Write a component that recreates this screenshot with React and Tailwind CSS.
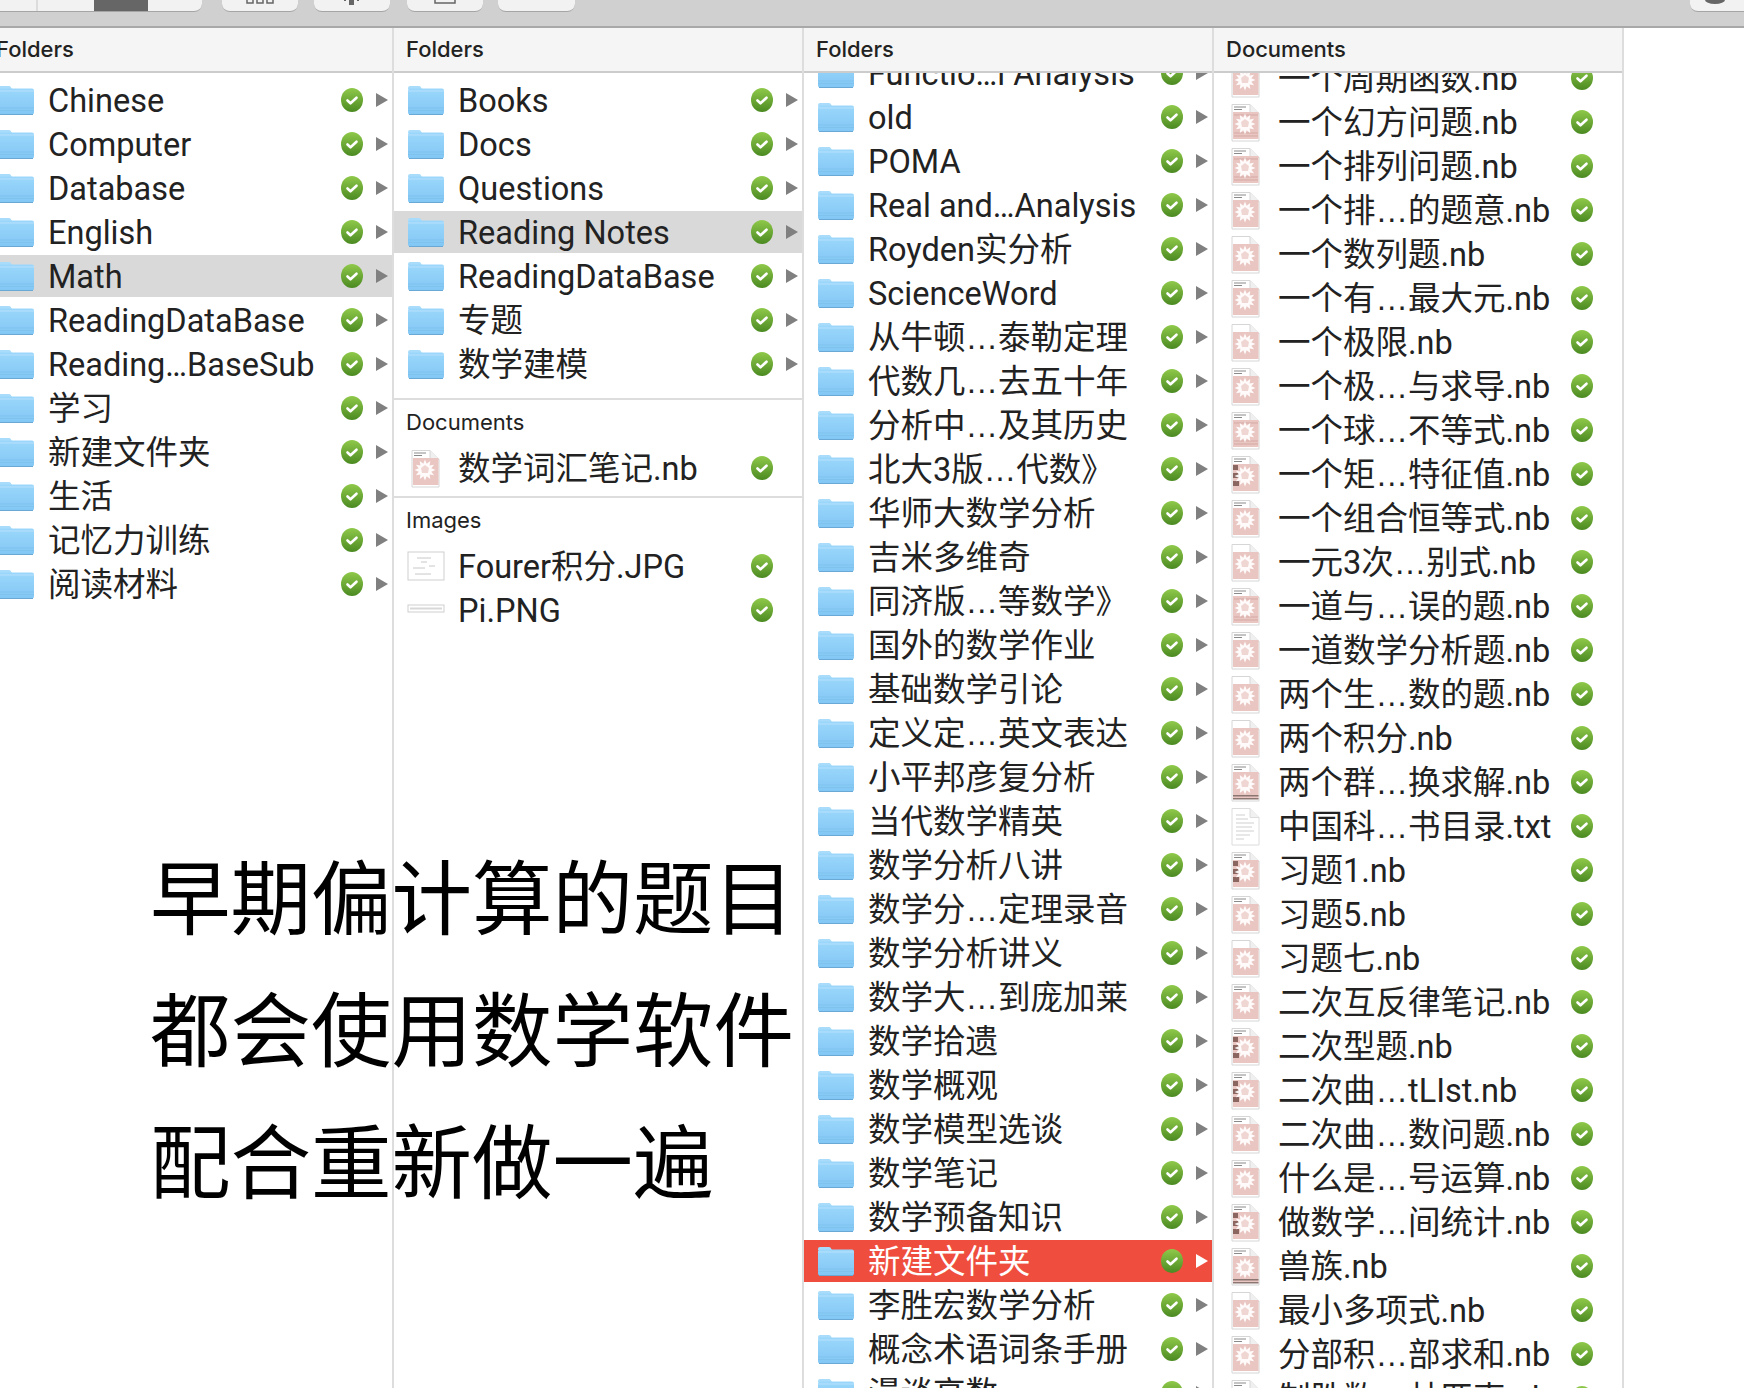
import React from 'react';

const folders1 = ['Chinese', 'Computer', 'Database', 'English', 'Math', 'ReadingDataBase', 'Reading…BaseSub', '学习', '新建文件夹', '生活', '记忆力训练', '阅读材料'];
const folders2 = ['Books', 'Docs', 'Questions', 'Reading Notes', 'ReadingDataBase', '专题', '数学建模'];
const folders3 = ['Functio…l Analysis', 'old', 'POMA', 'Real and…Analysis', 'Royden实分析', 'ScienceWord', '从牛顿…泰勒定理', '代数几…去五十年', '分析中…及其历史', '北大3版…代数》', '华师大数学分析', '吉米多维奇', '同济版…等数学》', '国外的数学作业', '基础数学引论', '定义定…英文表达', '小平邦彦复分析', '当代数学精英', '数学分析八讲', '数学分…定理录音', '数学分析讲义', '数学大…到庞加莱', '数学拾遗', '数学概观', '数学模型选谈', '数学笔记', '数学预备知识', '新建文件夹', '李胜宏数学分析', '概念术语词条手册', '漫谈高数'];
// [name, icon variant]
const docs = [
  ['一个周期函数.nb', 'lines'], ['一个幻方问题.nb', 'dense'], ['一个排列问题.nb', 'dense'], ['一个排…的题意.nb', 'lines'],
  ['一个数列题.nb', 'plain'], ['一个有…最大元.nb', 'lines'], ['一个极限.nb', 'plain'], ['一个极…与求导.nb', 'lines'],
  ['一个球…不等式.nb', 'dense'], ['一个矩…特征值.nb', 'dark'], ['一个组合恒等式.nb', 'lines'], ['一元3次…别式.nb', 'plain'],
  ['一道与…误的题.nb', 'dense'], ['一道数学分析题.nb', 'lines'], ['两个生…数的题.nb', 'plain'], ['两个积分.nb', 'plain'],
  ['两个群…换求解.nb', 'bars'], ['中国科…书目录.txt', 'txt'], ['习题1.nb', 'dark'], ['习题5.nb', 'lines'],
  ['习题七.nb', 'plain'], ['二次互反律笔记.nb', 'lines'], ['二次型题.nb', 'dark'], ['二次曲…tLIst.nb', 'dark'],
  ['二次曲…数问题.nb', 'lines'], ['什么是…号运算.nb', 'lines'], ['做数学…间统计.nb', 'dark'], ['兽族.nb', 'bars'],
  ['最小多项式.nb', 'plain'], ['分部积…部求和.nb', 'lines'], ['制胜数…林匹克.nb', 'bars'],
];

const FolderIcon = () => (
  <svg width="38" height="30" viewBox="0 0 38 30">
    <path d="M1 3a2 2 0 0 1 2-2h9a2 2 0 0 1 1.6.8L15 4h-14z" fill="#a9dcfb" />
    <path d="M1 5.500a2 2 0 0 1 2-2h32a2 2 0 0 1 2 2V27.500a2 2 0 0 1-2 2H3a2 2 0 0 1-2-2z" fill="url(#folderFill)" />
    <path d="M1 6h36" stroke="#b8e2fc" strokeWidth="1" />
    <path d="M1 23h36M1 25.500h36" stroke="#7cbfeb" strokeWidth="0.7" />
    <path d="M2 29.500h34" stroke="#6aa9d6" strokeWidth="1" />
  </svg>
);

const spikey = Array.from({ length: 24 }, (_, i) => {
  const r = i % 2 === 0 ? 10.500 : 6.500;
  const a = (i * Math.PI) / 12;
  return `${(15 + r * Math.sin(a)).toFixed(1)},${(21 - r * Math.cos(a)).toFixed(1)}`;
}).join(' ');

const DocIcon = ({ variant }) => {
  const sheet = 'M2 1.500H20L29 10.500V38H2z';
  if (variant === 'txt') {
    return (
      <svg width="30" height="39" viewBox="0 0 30 39">
        <path d={sheet} fill="#fff" stroke="#dcdcdc" />
        <path d="M20 1.500V10.500H29" fill="#f1f1f1" stroke="#dcdcdc" />
        <path d="M6 8h9M6 12h12M6 16h18M6 20h16M6 24h18M6 28h14M6 32h8" stroke="#cfcfcf" strokeWidth="1" />
      </svg>
    );
  }
  return (
    <svg width="30" height="39" viewBox="0 0 30 39">
      <path d={sheet} fill="#fff" stroke="#d6d6d6" />
      <path d="M20 1.500V10.500H29" fill="#f0f0f0" stroke="#d6d6d6" />
      <path d="M3 9h25.500v27H3z" fill="#eac6c2" />
      {variant === 'plain' ? null : <path d="M4 4h12M4 6.500h8" stroke="#8a8a8a" strokeWidth="1" />}
      {variant === 'dense' ? <path d="M4 12h24M4 30h24M4 33h24" stroke="#d3a9a5" strokeWidth="1" /> : null}
      {variant === 'dark' ? <path d="M3 10h5v5H3zM3 18h6v5H3zM3 26h6v5H3z" fill="#8b6560" /> : null}
      {variant === 'bars' ? <path d="M3 32h25.500v1.500H3zM3 35h25.500v1.500H3z" fill="#8c7672" /> : null}
      <polygon points={spikey} fill="#fff" opacity="0.92" />
      <polygon points="15,16 19,19 18,24 12,24 11,19" fill="#eac6c2" opacity="0.7" />
    </svg>
  );
};

const ImageIcon = ({ wide }) => (
  <svg width="38" height="30" viewBox="0 0 38 30">
    {wide ? (
      <g>
        <rect x="1" y="10" width="36" height="7" fill="#fff" stroke="#cfcfcf" />
        <path d="M3 13.500h32" stroke="#d8d8d8" strokeWidth="2" />
      </g>
    ) : (
      <g>
        <rect x="1" y="1" width="36" height="28" fill="#fff" stroke="#cfcfcf" />
        <path d="M10 7h14M14 11h6M6 17h12M22 15h6M8 23h16" stroke="#c8c8c8" strokeWidth="1" />
      </g>
    )}
  </svg>
);

const CheckBadge = () => (
  <svg width="22" height="24" viewBox="0 0 22 24" className="flex-none">
    <ellipse cx="11" cy="12" rx="11" ry="12" fill="url(#badgeFill)" />
    <path d="M6.500 12.500l3 2.800 6-5.600" fill="none" stroke="#fff" strokeWidth="2.600" strokeLinecap="round" strokeLinejoin="round" />
  </svg>
);

const Arrow = ({ light }) => (
  <svg width="12" height="14" viewBox="0 0 12 14" className="flex-none">
    <path d="M0 0L12 7L0 14z" fill={light ? '#ffffff' : '#808080'} />
  </svg>
);

// Ellipsis between CJK characters is wider in the reference than Roboto's
const RowName = ({ name }) => {
  if (!/[^\x00-\x7f]…/.test(name)) return name;
  const [head, tail] = name.split('…');
  return (
    <>
      {head}
      <span className="font-['Liberation_Sans',sans-serif]">…</span>
      {tail}
    </>
  );
};

const Row = ({ name, icon, state, arrow }) => {
  const rowBg = state === 'selected' ? 'bg-[#ef4e3e] text-white' : state === 'active' ? 'bg-[#d9d9d9] text-[#222222]' : 'text-[#222222]';
  return (
    <div className={`flex h-[42px] mb-[2px] items-center ${rowBg}`}>
      <div className={`flex w-[64px] flex-none items-center ${icon.type === DocIcon ? 'pl-[16px]' : 'pl-[13px]'}`}>{icon}</div>
      <div className="min-w-0 flex-1 whitespace-nowrap pt-[2px] font-['Roboto','Noto_Sans_CJK_SC',sans-serif] text-[32.5px] leading-[40px]">
        <RowName name={name} />
      </div>
      <CheckBadge />
      <div className="ml-[13px] mr-[4px] flex w-3 flex-none">{arrow ? <Arrow light={state === 'selected'} /> : null}</div>
    </div>
  );
};

const FolderRows = ({ names, active, selected }) =>
  names.map((name, i) => (
    <Row key={name + i} name={name} icon={<FolderIcon />} arrow state={i === active ? 'active' : i === selected ? 'selected' : undefined} />
  ));

const Column = ({ title, className = '', children }) => (
  <div className={`flex h-full w-[410px] flex-none flex-col overflow-hidden border-r-2 border-[#dddddd] ${className}`}>
    <div className="relative z-10 flex h-[45px] flex-none items-center border-b-2 border-[#cccccc] bg-[#f5f5f5] pl-[12px] text-[22px] font-medium text-[#222222]">
      {title}
    </div>
    {children}
  </div>
);

const SectionLabel = ({ children }) => (
  <div className="flex h-[49px] items-center border-t-2 border-[#dddddd] pb-[2px] pl-[12px] text-[22px] text-[#222222]">{children}</div>
);

const Toolbar = () => (
  <div className="flex h-[28px] flex-none items-start border-b-2 border-[#a8a8a8] bg-[#d0d0d0]">
    <div className="flex h-3 w-[202px] overflow-hidden rounded-br-lg border-b border-[#a5a5a5] bg-[#f2f2f2]">
      <div className="w-[38px] border-r-2 border-[#dcdcdc]" />
      <div className="ml-[56px] w-[54px] bg-[#666666]" />
    </div>
    <div className="ml-[20px] flex h-3 w-[76px] justify-center rounded-b-lg border-b border-[#a5a5a5] bg-[#f2f2f2]">
      <svg width="30" height="5" viewBox="0 0 30 5">
        <path d="M2 0v3h6V0M12 0v3h6V0M22 0v3h6V0" fill="none" stroke="#666666" strokeWidth="1.500" />
      </svg>
    </div>
    <div className="ml-[16px] flex h-3 w-[76px] justify-center rounded-b-lg border-b border-[#a5a5a5] bg-[#f2f2f2]">
      <svg width="20" height="5" viewBox="0 0 20 5">
        <path d="M7 0h5v5H7zM2 0h2v1H2zM15 0h2v1h-2z" fill="#666666" />
      </svg>
    </div>
    <div className="ml-[17px] flex h-3 w-[76px] justify-center rounded-b-lg border-b border-[#a5a5a5] bg-[#f2f2f2]">
      <svg width="22" height="4" viewBox="0 0 22 4">
        <path d="M1 0v3h20V0" fill="none" stroke="#666666" strokeWidth="1.500" />
      </svg>
    </div>
    <div className="ml-[15px] h-3 w-[77px] rounded-b-lg border-b border-[#a5a5a5] bg-[#f2f2f2]" />
    <div className="ml-auto flex h-3 w-[54px] justify-start rounded-bl-lg border-b border-[#a5a5a5] bg-[#f2f2f2] pl-[15px]">
      <svg width="20" height="4" viewBox="0 0 20 4">
        <path d="M0 0h20a10 4 0 0 1-20 0z" fill="#666666" />
      </svg>
    </div>
  </div>
);

export default function App() {
  return (
    <div className="relative flex h-[1388px] w-[1744px] flex-col overflow-hidden bg-white font-['Inter','Noto_Sans_CJK_SC',sans-serif]">
      {/* shared gradients */}
      <svg width="0" height="0" className="absolute">
        <defs>
          <linearGradient id="folderFill" x1="0" y1="0" x2="0" y2="1">
            <stop offset="0" stopColor="#9bd7fb" />
            <stop offset="1" stopColor="#82c7f5" />
          </linearGradient>
          <linearGradient id="badgeFill" x1="0" y1="0" x2="0" y2="1">
            <stop offset="0" stopColor="#8fc94a" />
            <stop offset="1" stopColor="#4b8a22" />
          </linearGradient>
        </defs>
      </svg>

      <Toolbar />

      <div className="-ml-[16px] flex min-h-0 flex-1">
        <Column title="Folders">
          <div className="pt-[6px]">
            <FolderRows names={folders1} active={4} />
          </div>
        </Column>

        <Column title="Folders">
          <div className="pt-[6px]">
            <FolderRows names={folders2} active={3} />
          </div>
          <div className="mt-[11px]">
            <SectionLabel>Documents</SectionLabel>
            <Row name="数学词汇笔记.nb" icon={<DocIcon variant="lines" />} />
          </div>
          <div className="mt-[5px]">
            <SectionLabel>Images</SectionLabel>
            <Row name="Fourer积分.JPG" icon={<ImageIcon />} />
            <Row name="Pi.PNG" icon={<ImageIcon wide />} />
          </div>
        </Column>

        <Column title="Folders">
          <div className="-mt-[21px]">
            <FolderRows names={folders3} selected={27} />
          </div>
        </Column>

        <Column title="Documents">
          <div className="-mt-[16px]">
            {docs.map(([name, variant]) => (
              <Row key={name} name={name} icon={<DocIcon variant={variant} />} />
            ))}
          </div>
        </Column>
      </div>

      {/* caption laid over the screenshot */}
      <div className="absolute left-[150px] top-[833px] text-[80.5px] leading-[132px] whitespace-nowrap text-black">
        <div>早期偏计算的题目</div>
        <div>都会使用数学软件</div>
        <div>配合重新做一遍</div>
      </div>
    </div>
  );
}
